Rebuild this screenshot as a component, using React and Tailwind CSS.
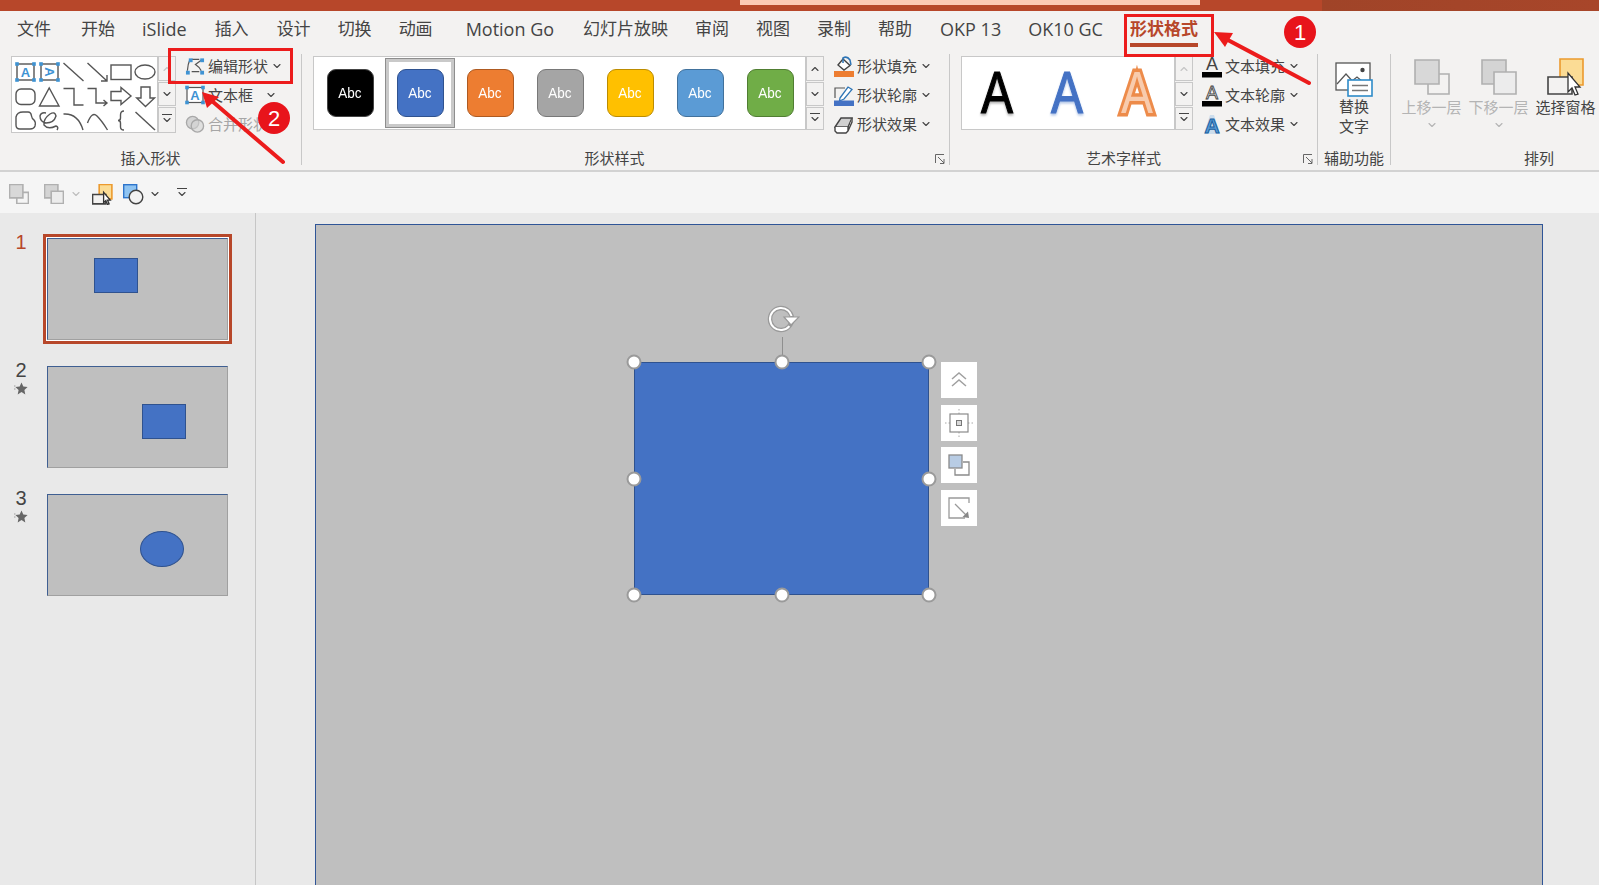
import { ChevronDown, ChevronUp } from "lucide-react";

const TABS = [
  { label: "文件", cls: "" },
  { label: "开始", cls: "ml-[3px]" },
  { label: "iSlide", cls: "text-[18px]" },
  { label: "插入", cls: "ml-[1px]" },
  { label: "设计", cls: "ml-[1px]" },
  { label: "切换", cls: "" },
  { label: "动画", cls: "" },
  { label: "Motion Go", cls: "ml-[6px] text-[18px]" },
  { label: "幻灯片放映", cls: "ml-[2px]" },
  { label: "审阅", cls: "" },
  { label: "视图", cls: "" },
  { label: "录制", cls: "" },
  { label: "帮助", cls: "" },
  { label: "OKP 13", cls: "ml-[1px] text-[18px]" },
  { label: "OK10 GC", cls: "text-[18px]" },
];

const SWATCHES = [
  { cls: "bg-black border-[#444]", selected: false },
  { cls: "bg-[#4472c4] border-[#2f528f]", selected: true },
  { cls: "bg-[#ed7d31] border-[#ae5a21]", selected: false },
  { cls: "bg-[#a5a5a5] border-[#787878]", selected: false },
  { cls: "bg-[#ffc000] border-[#bc8c00]", selected: false },
  { cls: "bg-[#5b9bd5] border-[#41719c]", selected: false },
  { cls: "bg-[#70ad47] border-[#507e32]", selected: false },
];

const HANDLES = [
  "left-0 top-0",
  "left-1/2 top-0",
  "left-full top-0",
  "left-0 top-1/2",
  "left-full top-1/2",
  "left-0 top-full",
  "left-1/2 top-full",
  "left-full top-full",
];

function Chev({ className = "text-[#444]" }) {
  return <ChevronDown className={`w-[12px] h-[12px] ${className}`} strokeWidth={2.2} />;
}

function ShapeGallery() {
  const s = { fill: "none", stroke: "#555", strokeWidth: 1.4 };
  const blue = "#3f93d3";
  const dots = (x1, y1, x2, y2) =>
    [[x1, y1], [x2, y1], [x1, y2], [x2, y2]].map(([x, y]) => (
      <rect key={`${x}-${y}`} x={x - 1.8} y={y - 1.8} width="3.6" height="3.6" fill={blue} />
    ));
  return (
    <svg width="146" height="77" viewBox="0 0 146 77">
      <rect x="5" y="7" width="17" height="16" {...s} />
      {dots(5, 7, 22, 23)}
      <text x="13.5" y="20" textAnchor="middle" fontSize="13" fontWeight="700" fill="#3f93d3" fontFamily="Liberation Sans">A</text>
      <rect x="29" y="7" width="17" height="16" {...s} />
      {dots(29, 7, 46, 23)}
      <text x="0" y="0" textAnchor="middle" fontSize="13" fontWeight="700" fill="#3f93d3" fontFamily="Liberation Sans" transform="translate(33 15) rotate(90)">A</text>
      <path d="M51.5 6 L71.5 24" {...s} />
      <path d="M75.5 6 L95 24 M95 18 V24 H89" {...s} />
      <rect x="99" y="8" width="20" height="14.5" {...s} />
      <ellipse cx="133" cy="15" rx="10" ry="7" {...s} />
      <rect x="4" y="32" width="19" height="15.5" rx="5" {...s} />
      <path d="M27.5 49 H47 L37.2 31 Z" {...s} />
      <path d="M51.5 31.5 H62 V48 H71.5" {...s} />
      <path d="M75.5 31.5 H84 V46 H95 M91.5 43 L95 46 L91.5 49" {...s} />
      <path d="M99 34.5 H109 V30.5 L119 39 L109 47.5 V43.5 H99 Z" {...s} />
      <path d="M129 30 H138 V41 H142.5 L133.5 49.5 L124.7 41 H129 Z" {...s} />
      <path d="M4 60 Q5 55 11 55 H16 Q19 55 19.5 59 Q20 62 22 63 Q24 65 23 69 Q22 72 18 72 H8 Q4 72 4 68 Z" {...s} />
      <path d="M34 56 Q29 55 28 59 Q28 65 34 66 Q42 66 44 59 Q43 54 38 57 Q31 62 32 68 Q36 73 44 69 Q47 70 45 73" {...s} />
      <path d="M51.5 57 Q66 56 71 73" {...s} />
      <path d="M75.5 66 Q80 54 85 59 T95.5 73" {...s} />
      <path d="M112 54 Q108.5 54 108.5 58 V61 Q108.5 63.5 106 63.5 Q108.5 63.5 108.5 66 V70 Q108.5 73 112 73" {...s} />
      <path d="M123.5 55 L143 73" {...s} />
    </svg>
  );
}

function EditShapeIcon() {
  return (
    <svg width="21" height="20" viewBox="0 0 21 20">
      <path d="M5 3.5 Q3 8 2.5 15 M7 16 H15 M7 3 H15 M17 4 L11 8.5 Q15 11 17 15" fill="none" stroke="#555" strokeWidth="1.3" />
      {[[4, 2], [16, 2], [1, 15], [16, 15]].map(([x, y]) => (
        <rect key={`${x}-${y}`} x={x} y={y} width="4" height="4" fill="#3f93d3" />
      ))}
    </svg>
  );
}

function TextBoxIcon() {
  return (
    <svg width="20" height="20" viewBox="0 0 20 20">
      <rect x="2" y="2.5" width="16" height="15" fill="#fff" stroke="#555" strokeWidth="1.2" />
      {[[2, 2.5], [18, 2.5], [2, 17.5], [18, 17.5]].map(([x, y]) => (
        <rect key={`${x}-${y}`} x={x - 1.8} y={y - 1.8} width="3.6" height="3.6" fill="#3f93d3" />
      ))}
      <text x="10" y="15" textAnchor="middle" fontSize="13" fontWeight="700" fill="#3f93d3" fontFamily="Liberation Sans">A</text>
    </svg>
  );
}

function MergeIcon() {
  return (
    <svg width="21" height="20" viewBox="0 0 21 20">
      <circle cx="8" cy="8.5" r="6.5" fill="#d4d4d4" stroke="#a8a8a8" strokeWidth="1.4" />
      <circle cx="13" cy="12" r="6.5" fill="#d4d4d4" fillOpacity="0.6" stroke="#a8a8a8" strokeWidth="1.4" />
    </svg>
  );
}

function FillIcon() {
  return (
    <svg width="20" height="21" viewBox="0 0 20 21">
      <path d="M9 3 L16 9.5 L10 14 L4 9 Z" fill="#fff" stroke="#444" strokeWidth="1.4" />
      <path d="M9 7 V2 Q13 -0.5 16 4 L17 9" fill="none" stroke="#2e75b6" strokeWidth="1.5" />
      <rect x="0" y="15" width="20" height="6" fill="#ed7d31" />
    </svg>
  );
}

function OutlineIcon() {
  return (
    <svg width="20" height="21" viewBox="0 0 20 21">
      <path d="M1 13 V3 H11" fill="none" stroke="#555" strokeWidth="1.2" />
      <path d="M6 13 L14 2 L18 4.5 L10 14 L5.5 16 Z" fill="#fff" stroke="#2e75b6" strokeWidth="1.3" />
      <rect x="0" y="15.5" width="20" height="5.5" fill="#4472c4" />
    </svg>
  );
}

function EffectIcon() {
  return (
    <svg width="20" height="20" viewBox="0 0 20 20">
      <path d="M1 13 L7 4 H18 L14 13 H1 Z" fill="#d0d0d0" stroke="#444" strokeWidth="1.4" />
      <path d="M1 13 V17 L3 19 H12 L14 17 V13 M14 17 L18 8 V4" fill="#fff" stroke="#444" strokeWidth="1.4" />
    </svg>
  );
}

function TextBarIcon({ outline }) {
  return (
    <svg width="20" height="23" viewBox="0 0 20 23">
      <text
        x="10"
        y="15"
        textAnchor="middle"
        fontSize="18"
        fontFamily="Liberation Sans"
        fill={outline ? "#fff" : "#444"}
        stroke={outline ? "#444" : "none"}
        strokeWidth="0.9"
      >
        A
      </text>
      <rect x="0" y="17" width="20" height="5.5" fill="#000" />
    </svg>
  );
}

function TextEffectIcon() {
  return (
    <svg width="20" height="23" viewBox="0 0 20 23">
      <path d="M2 21 L8 2 H12 L18 21 Z" fill="#9dc3e6" fillOpacity="0.45" />
      <text x="10" y="19.5" textAnchor="middle" fontSize="21" fontWeight="700" fontFamily="Liberation Sans" fill="#5b9bd5" stroke="#17609f" strokeWidth="1">
        A
      </text>
    </svg>
  );
}

function AltTextIcon() {
  return (
    <svg width="38" height="35" viewBox="0 0 38 35">
      <rect x="1" y="1" width="34" height="27" fill="#fff" stroke="#555" strokeWidth="1.3" />
      <path d="M2 22 L11 12 L20 22 M17 19 L22 15 L28 20" fill="none" stroke="#555" strokeWidth="1.2" />
      <circle cx="27.5" cy="8" r="2.2" fill="#444" />
      <rect x="13" y="18" width="24" height="16" fill="#fff" stroke="#2e8bc9" strokeWidth="1.6" />
      <path d="M17 23.5 H33 M17 28.5 H33" stroke="#777" strokeWidth="1.4" />
    </svg>
  );
}

function LayerIcon({ size = 36, front = false }) {
  const edge = { stroke: "#b0b0b0", strokeWidth: 1.6, vectorEffect: "non-scaling-stroke" };
  return (
    <svg width={size} height={size} viewBox="0 0 36 36">
      {front ? (
        <>
          <rect x="1" y="1" width="24" height="24" fill="#d4d4d4" {...edge} />
          <rect x="13" y="13" width="22" height="22" fill="#ececec" {...edge} />
        </>
      ) : (
        <>
          <path d="M14 15 H35 V35 H14 Z" fill="none" {...edge} />
          <rect x="1" y="1" width="24" height="24" fill="#d8d8d8" {...edge} />
        </>
      )}
    </svg>
  );
}

function PaneIcon({ size = 38 }) {
  return (
    <svg width={size} height={size} viewBox="0 0 38 38">
      <rect x="13" y="1" width="23" height="26" fill="#fbdc95" stroke="#ec9a2e" strokeWidth="1.6" vectorEffect="non-scaling-stroke" />
      <rect x="1" y="19" width="24" height="17" fill="#f3f2f1" stroke="#444" strokeWidth="1.6" vectorEffect="non-scaling-stroke" />
      <path d="M21 15 V34 L25 30 L28 37 L31 36 L28 29 L33 29 Z" fill="#fff" stroke="#333" strokeWidth="1.3" vectorEffect="non-scaling-stroke" />
    </svg>
  );
}

function ShapesIcon() {
  return (
    <svg width="21" height="21" viewBox="0 0 21 21">
      <rect x="0.7" y="0.7" width="13" height="13" fill="#8fc4f2" stroke="#2e75cc" strokeWidth="1.4" />
      <circle cx="13" cy="13" r="6.8" fill="#f3f3f3" stroke="#444" strokeWidth="1.4" />
    </svg>
  );
}

function MoreLines({ className = "text-[#444]" }) {
  return (
    <div className={`flex flex-col items-center ${className}`}>
      <div className="w-[10px] h-px bg-current"></div>
      <ChevronDown className="w-[12px] h-[12px] -mt-px" strokeWidth={2.2} />
    </div>
  );
}

function ScrollStack({ lastHeight = "h-[23px]", upDisabled = false }) {
  const cell = "w-[18px] flex items-center justify-center bg-[#f3f2f1] border border-[#c8c8c8]";
  return (
    <div className="flex flex-col gap-px">
      <div className={`${cell} h-[25px]`}>
        <ChevronUp className={`w-[12px] h-[12px] ${upDisabled ? "text-[#c4c4c4]" : "text-[#444]"}`} strokeWidth={2.2} />
      </div>
      <div className={`${cell} h-[24px]`}>
        <Chev />
      </div>
      <div className={`${cell} ${lastHeight}`}>
        <MoreLines />
      </div>
    </div>
  );
}

function ToolRow({ icon, label, disabled, chevronGap = "ml-[3px]", iconCls = "w-[20px]", hideChevron }) {
  return (
    <div className="flex items-center h-[22px] whitespace-nowrap">
      <div className={`${iconCls} flex justify-center`}>{icon}</div>
      <span className={`ml-[3px] text-[15px] leading-none ${disabled ? "text-[#a6a6a6]" : "text-[#444]"}`}>{label}</span>
      {!hideChevron && (
        <span className={chevronGap}>
          <Chev />
        </span>
      )}
    </div>
  );
}

function Sep() {
  return <div className="w-px h-[111px] mt-[-2px] bg-[#c8c8c8] shrink-0"></div>;
}

function Launcher() {
  return (
    <svg className="absolute right-[4px] top-[6px]" width="10" height="10" viewBox="0 0 10 10">
      <path d="M0.5 9 V0.5 H9 M3 3 L9 9 M9 5 V9.5 H5" fill="none" stroke="#666" strokeWidth="1" />
    </svg>
  );
}

function Group({ width, label, labelCls = "", launcher, children }) {
  return (
    <div className={`${width} shrink-0 flex flex-col`}>
      <div className="h-[92px] flex items-start">{children}</div>
      <div className={`relative h-[20px] flex items-center justify-center text-[15px] text-[#444] whitespace-nowrap ${labelCls}`}>
        {label}
        {launcher && <Launcher />}
      </div>
    </div>
  );
}

function BigTool({ icon, lines, disabled, chevron }) {
  return (
    <div className={`w-[67px] flex flex-col items-center text-[15px] leading-[20px] whitespace-nowrap ${disabled ? "text-[#b4b4b4]" : "text-[#444]"}`}>
      <div className="h-[38px] mt-[2px] flex items-center justify-center">{icon}</div>
      {lines.map((line) => (
        <span key={line} className="mt-[1px]">{line}</span>
      ))}
      {chevron && (
        <span className="mt-[2px]">
          <Chev className="text-[#b4b4b4]" />
        </span>
      )}
    </div>
  );
}

function Ribbon() {
  return (
    <div className="h-[122px] pt-[6px] flex bg-[#f3f2f1] border-b-2 border-[#d2d2d2]">
      <Group width="w-[301px]" label="插入形状">
        <div className="ml-[11px] w-[147px] h-[77px] bg-white border border-[#c8c8c8]">
          <ShapeGallery />
        </div>
        <ScrollStack lastHeight="h-[26px]" upDisabled />
        <div className="ml-[9px] -mt-[1px] flex flex-col gap-[7px]">
          <ToolRow icon={<EditShapeIcon />} label="编辑形状" />
          <ToolRow icon={<TextBoxIcon />} label="文本框" chevronGap="ml-[12px]" />
          <ToolRow icon={<MergeIcon />} label="合并形状" disabled hideChevron />
        </div>
      </Group>
      <Sep />
      <Group width="w-[647px]" label="形状样式" labelCls="pr-[22px]" launcher>
        <div className="ml-[11px] w-[493px] h-[74px] pl-[1px] flex items-center bg-white border border-[#c8c8c8]">
          {SWATCHES.map((swatch, i) => (
            <div
              key={i}
              className={`w-[70px] h-[70px] flex items-center justify-center ${
                swatch.selected ? "border border-[#8e8e8e] outline-[3px] outline-[#c9c9c9] -outline-offset-[4px]" : ""
              }`}
            >
              <div className={`w-[47px] h-[48px] rounded-[9px] border flex items-center justify-center text-[15px] text-white font-['Liberation_Sans',sans-serif] ${swatch.cls}`}>
                <span className="scale-x-90">Abc</span>
              </div>
            </div>
          ))}
        </div>
        <ScrollStack />
        <div className="ml-[10px] -mt-[1px] flex flex-col gap-[7px]">
          <ToolRow icon={<FillIcon />} label="形状填充" />
          <ToolRow icon={<OutlineIcon />} label="形状轮廓" />
          <ToolRow icon={<EffectIcon />} label="形状效果" />
        </div>
      </Group>
      <Sep />
      <Group width="w-[367px]" label="艺术字样式" labelCls="pr-[20px]" launcher>
        <div className="ml-[11px] w-[214px] h-[74px] flex items-center bg-white border border-[#c8c8c8] overflow-hidden font-['Liberation_Sans',sans-serif] text-[60px] leading-none">
          <div className="w-[70px] text-center text-black scale-x-[.8] [-webkit-text-stroke:1.2px_#000] [filter:drop-shadow(0_2px_1px_rgba(0,0,0,0.3))]">A</div>
          <div className="w-[70px] text-center text-[#4472c4] scale-x-[.8] [-webkit-text-stroke:1.2px_#4472c4] [filter:drop-shadow(0_2px_1px_rgba(68,114,196,0.4))]">A</div>
          <div className="w-[70px] text-center text-[#f8cbad] scale-x-[.8] [-webkit-text-stroke:7px_#ed8b4a] [paint-order:stroke_fill]">A</div>
        </div>
        <ScrollStack upDisabled />
        <div className="ml-[8px] -mt-[1px] flex flex-col gap-[7px]">
          <ToolRow icon={<TextBarIcon />} label="文本填充" iconCls="w-[21px]" />
          <ToolRow icon={<TextBarIcon outline />} label="文本轮廓" iconCls="w-[21px]" />
          <ToolRow icon={<TextEffectIcon />} label="文本效果" iconCls="w-[21px]" />
        </div>
      </Group>
      <Sep />
      <Group width="w-[72px]" label="辅助功能">
        <div className="w-full flex flex-col items-center text-[15px] leading-[20px] text-[#444]">
          <div className="mt-[6px] h-[35px]">
            <AltTextIcon />
          </div>
          <span className="-mt-[1px]">替换</span>
          <span>文字</span>
        </div>
      </Group>
      <Sep />
      <Group width="flex-1" label="排列" labelCls="pl-[88px]">
        <div className="pl-[7px] flex">
          <BigTool icon={<LayerIcon front={false} />} lines={["上移一层"]} disabled chevron />
          <BigTool icon={<LayerIcon front />} lines={["下移一层"]} disabled chevron />
          <BigTool icon={<PaneIcon />} lines={["选择窗格"]} />
        </div>
      </Group>
    </div>
  );
}

function QuickBar() {
  return (
    <div className="h-[41px] pt-[3px] pl-[9px] flex items-center bg-[#f5f5f5]">
      <LayerIcon size={20} />
      <div className="ml-[15px]">
        <LayerIcon size={20} front />
      </div>
      <span className="ml-[6px]">
        <Chev className="text-[#bdbdbd]" />
      </span>
      <div className="ml-[10px]">
        <PaneIcon size={21} />
      </div>
      <div className="ml-[10px]">
        <ShapesIcon />
      </div>
      <span className="ml-[5px]">
        <Chev />
      </span>
      <div className="ml-[15px]">
        <MoreLines />
      </div>
    </div>
  );
}

function Star() {
  return (
    <svg width="14" height="13" viewBox="0 0 14 13">
      <path d="M7.5 0.5 L9.3 4.6 L13.6 5 L10.4 8 L11.3 12.4 L7.5 10.1 L3.7 12.4 L4.6 8 L1.4 5 L5.7 4.6 Z" fill="#666" />
      <path d="M0 4 H1.5 M0 7 H1.5" stroke="#888" strokeWidth="0.8" />
    </svg>
  );
}

function Thumb({ number, active, starred, children }) {
  return (
    <div className="flex items-start">
      <div className="w-[42px] -mt-[8px] flex flex-col items-center">
        <span className={`text-[20px] leading-[24px] font-['Liberation_Sans',sans-serif] ${active ? "text-[#b7472a]" : "text-[#444]"}`}>
          {number}
        </span>
        {starred && <Star />}
      </div>
      <div
        className={`relative ml-[5px] w-[181px] h-[102px] bg-[#bfbfbf] border border-t-[#3f5f92] border-l-[#3f5f92] border-r-[#a0a0a0] border-b-[#a0a0a0] ${
          active ? "shadow-[0_0_0_1px_#fff,0_0_0_4px_#b7472a]" : ""
        }`}
      >
        {children}
      </div>
    </div>
  );
}

function SlideSidebar() {
  return (
    <div className="w-[256px] shrink-0 pt-[25px] flex flex-col gap-[26px] border-r border-[#c6c6c6]">
      <Thumb number="1" active>
        <div className="absolute left-[46px] top-[19px] w-[44px] h-[35px] bg-[#4472c4] border border-[#2f528f]"></div>
      </Thumb>
      <Thumb number="2" starred>
        <div className="absolute left-[94px] top-[37px] w-[44px] h-[35px] bg-[#4472c4] border border-[#2f528f]"></div>
      </Thumb>
      <Thumb number="3" starred>
        <div className="absolute left-[92px] top-[36px] w-[44px] h-[36px] rounded-[50%] bg-[#4472c4] border border-[#2f528f]"></div>
      </Thumb>
    </div>
  );
}

function FloatButton({ children }) {
  return <div className="w-[36px] h-[36px] bg-white flex items-center justify-center">{children}</div>;
}

function SelectedShape() {
  return (
    <div className="absolute left-[318px] top-[137px] w-[295px] h-[233px] bg-[#4472c4] shadow-[inset_0_0_0_1px_#2f528f]">
      <div className="absolute left-1/2 -top-[25px] w-px h-[25px] bg-[#8f8f8f]"></div>
      <svg className="absolute left-[132px] -top-[58px]" width="34" height="30" viewBox="0 0 34 30">
        <circle cx="15" cy="15" r="11" fill="none" stroke="#9a9a9a" strokeWidth="4.5" />
        <circle cx="15" cy="15" r="11" fill="none" stroke="#fff" strokeWidth="2" strokeDasharray="58 12" transform="rotate(40 15 15)" />
        <path d="M18 13 L33 13 L25 21 Z" fill="#fff" stroke="#9a9a9a" strokeWidth="1.2" />
      </svg>
      {HANDLES.map((pos) => (
        <div
          key={pos}
          className={`absolute w-[15px] h-[15px] rounded-full bg-white border-[2.5px] border-[#9a9a9a] -translate-x-1/2 -translate-y-1/2 ${pos}`}
        ></div>
      ))}
      <div className="absolute -right-[48px] top-0 flex flex-col gap-[6.5px]">
        <FloatButton>
          <svg width="20" height="18" viewBox="0 0 20 18">
            <path d="M3 8 L10 2 L17 8 M3 15 L10 9 L17 15" fill="none" stroke="#a0a0a0" strokeWidth="1.5" />
          </svg>
        </FloatButton>
        <FloatButton>
          <svg width="30" height="30" viewBox="0 0 30 30">
            <path d="M15 1 V6 M15 24 V29 M1 15 H6 M24 15 H29" stroke="#a8a8a8" strokeWidth="1" strokeDasharray="1.5 2" />
            <rect x="6" y="6" width="18" height="18" fill="none" stroke="#8a8a8a" strokeWidth="1.2" />
            <rect x="12.5" y="12.5" width="5" height="5" fill="#d9d9d9" stroke="#777" strokeWidth="1" />
          </svg>
        </FloatButton>
        <FloatButton>
          <svg width="22" height="22" viewBox="0 0 22 22">
            <path d="M15 8 H21 V21 H7 V15" fill="none" stroke="#8a8a8a" strokeWidth="1.3" />
            <rect x="1" y="1" width="13" height="13" fill="#b8cce4" stroke="#8a8a8a" strokeWidth="1.3" />
          </svg>
        </FloatButton>
        <FloatButton>
          <svg width="22" height="22" viewBox="0 0 22 22">
            <path d="M21 6 V1 H1 V21 H17" fill="none" stroke="#9a9a9a" strokeWidth="1.3" />
            <path d="M7 7 L19 19" stroke="#9a9a9a" strokeWidth="1.3" />
            <path d="M21 21 L14.5 20 L20 14.5 Z" fill="#888" />
          </svg>
        </FloatButton>
      </div>
    </div>
  );
}

function Callouts() {
  return (
    <>
      <div className="absolute left-[168px] top-[48px] w-[125px] h-[36px] border-[3px] border-[#ec1c1c]"></div>
      <div className="absolute left-[1124px] top-[14px] w-[90px] h-[43px] border-[3px] border-[#ec1c1c]"></div>
      <div className="absolute left-[258px] top-[102px] w-[32px] h-[32px] rounded-full bg-[#e8141b] flex items-center justify-center text-[22px] text-white font-['Liberation_Sans',sans-serif]">
        2
      </div>
      <div className="absolute left-[1284px] top-[16px] w-[32px] h-[32px] rounded-full bg-[#e8141b] flex items-center justify-center text-[22px] text-white font-['Liberation_Sans',sans-serif]">
        1
      </div>
      <svg className="absolute left-0 top-0 pointer-events-none" width="1599" height="200" viewBox="0 0 1599 200">
        <path d="M283 162 L212 101" stroke="#ec1c1c" strokeWidth="4" strokeLinecap="round" />
        <path d="M202 92 L219 97 L207 108 Z" fill="#ec1c1c" />
        <path d="M1309 83 L1226 39" stroke="#ec1c1c" strokeWidth="4" strokeLinecap="round" />
        <path d="M1214 32 L1233 33 L1225 47 Z" fill="#ec1c1c" />
      </svg>
    </>
  );
}

export default function App() {
  return (
    <div className="relative w-full h-screen overflow-hidden flex flex-col bg-[#e9e9e9] font-['Open_Sans','Noto_Sans_CJK_SC',sans-serif]">
      {/* title bar strip */}
      <div className="h-[11px] flex shrink-0 bg-[#b7472a]">
        <div className="w-[740px]"></div>
        <div className="w-[460px] h-[5px] bg-[#fcc9b5]"></div>
        <div className="w-[122px]"></div>
        <div className="flex-1 bg-gradient-to-r from-[#a04428] to-[#a8462a]"></div>
      </div>

      <div className="h-[39px] pl-[17px] pb-[3px] flex items-center gap-[27px] bg-[#f3f2f1] text-[17px] text-[#444] whitespace-nowrap shrink-0">
        {TABS.map((tab) => (
          <span key={tab.label} className={tab.cls}>
            {tab.label}
          </span>
        ))}
        <div className="relative font-bold text-[#b7472a]">
          形状格式
          <div className="absolute left-0 right-0 top-[27px] h-[4px] bg-[#b7472a]"></div>
        </div>
      </div>

      <Ribbon />
      <QuickBar />

      <div className="flex-1 min-h-0 flex">
        <SlideSidebar />
        <div className="flex-1 min-w-0 pl-[59px] pr-[56px] pt-[11px]">
          <div className="relative h-[700px] bg-[#bfbfbf] border border-[#2f5597]">
            <SelectedShape />
          </div>
        </div>
      </div>

      <Callouts />
    </div>
  );
}
